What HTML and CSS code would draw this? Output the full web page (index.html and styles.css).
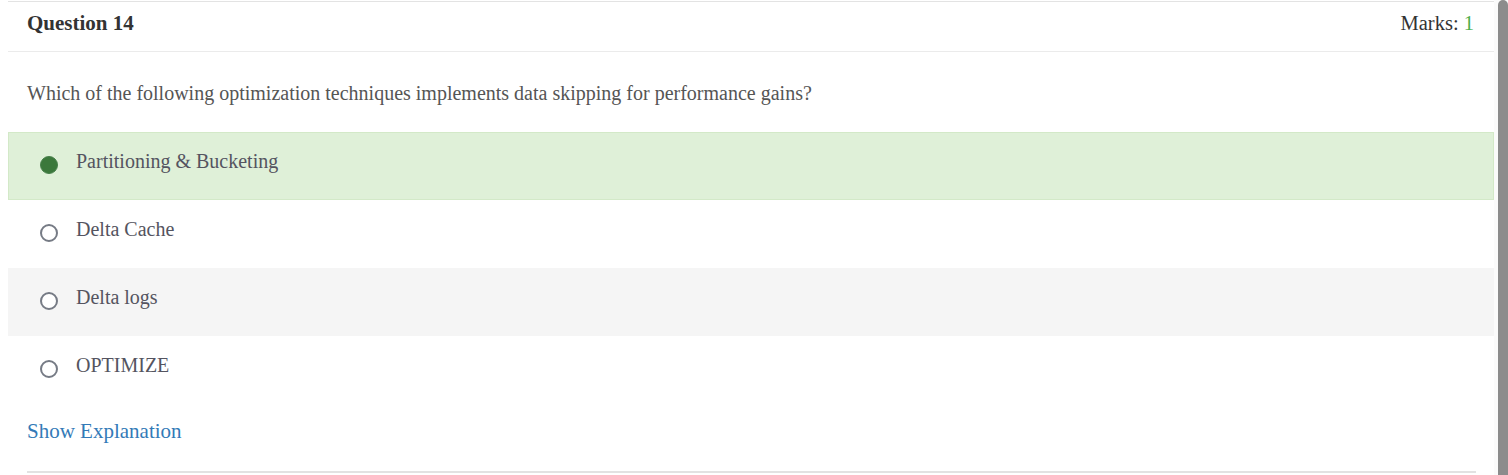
FILE: index.html
```html
<!DOCTYPE html>
<html>
<head>
<meta charset="utf-8">
<link rel="stylesheet" href="styles.css">
</head>
<body>
<div class="page">
  <div class="card">
    <div class="card-head">
      <h3 class="title">Question 14</h3>
      <div class="marks">Marks: <span class="marks-num">1</span></div>
    </div>
    <p class="question">Which of the following optimization techniques implements data skipping for performance gains?</p>
    <ul class="options">
      <li class="option option-correct"><span class="radio radio-on"></span><span class="opt-text">Partitioning &amp; Bucketing</span></li>
      <li class="option"><span class="radio"></span><span class="opt-text">Delta Cache</span></li>
      <li class="option option-alt"><span class="radio"></span><span class="opt-text">Delta logs</span></li>
      <li class="option"><span class="radio"></span><span class="opt-text">OPTIMIZE</span></li>
    </ul>
    <div class="explain"><a class="explain-link" href="#">Show Explanation</a></div>
    <div class="rule"></div>
  </div>
</div>
<div class="scroll-track"><div class="scroll-thumb"></div></div>
</body>
</html>
```

FILE: styles.css
```css
html, body {
  margin: 0;
  padding: 0;
  height: 100%;
  overflow: hidden;
}
body {
  display: flex;
  background: #ffffff;
  font-family: "Liberation Serif", "Times New Roman", serif;
  color: #555555;
}
.page {
  flex: 1;
  padding: 1px 0 0 8px;
  min-width: 0;
}
.card {
  border-top: 1px solid #e3e3e3;
}
.card-head {
  display: flex;
  align-items: center;
  justify-content: space-between;
  height: 49px;
  padding: 0 20px 0 19px;
  border-bottom: 1px solid #ebebeb;
}
.title {
  margin: 0;
  font-size: 21px;
  font-weight: bold;
  color: #333333;
  line-height: 20px;
  padding-bottom: 7px;
}
.marks {
  font-size: 20.5px;
  color: #333333;
  line-height: 20px;
  padding-bottom: 7px;
}
.marks-num {
  color: #4cae4c;
}
.question {
  margin: 0;
  padding: 31px 19px 29px;
  font-size: 20px;
  line-height: 20px;
  color: #555555;
}
.options {
  list-style: none;
  margin: 0;
  padding: 0;
}
.option {
  display: flex;
  align-items: flex-start;
  box-sizing: border-box;
  height: 68px;
  padding: 19px 0 0 31px;
  border: 1px solid transparent;
  border-top: 0;
}
.option-correct {
  background: #dff0d8;
  border: 1px solid #d3e9c8;
  padding-top: 18px;
}
.option-alt {
  background: #f5f5f5;
}
.radio {
  box-sizing: border-box;
  width: 18px;
  height: 18px;
  margin-top: 5px;
  border-radius: 50%;
  border: 2px solid #767b85;
  background: #ffffff;
  flex: none;
}
.radio-on {
  background: #3b783b;
  border: 1px solid #47804a;
}
.opt-text {
  margin-left: 18px;
  font-size: 20px;
  line-height: 20px;
  color: #545460;
}
.explain {
  padding: 17px 19px 0;
  height: 48px;
  box-sizing: border-box;
}
.explain-link {
  font-size: 21px;
  line-height: 20px;
  color: #337ab7;
  text-decoration: none;
}
.rule {
  margin: 19px 18px 0 19px;
  border-top: 2px solid #e2e2e2;
}
.scroll-track {
  width: 14px;
  flex: none;
  background: #fbfbfb;
  display: flex;
  justify-content: flex-end;
}
.scroll-thumb {
  width: 10px;
  height: 100%;
  background: #8c8c8c;
  border-radius: 5px 5px 0 0;
}
```
